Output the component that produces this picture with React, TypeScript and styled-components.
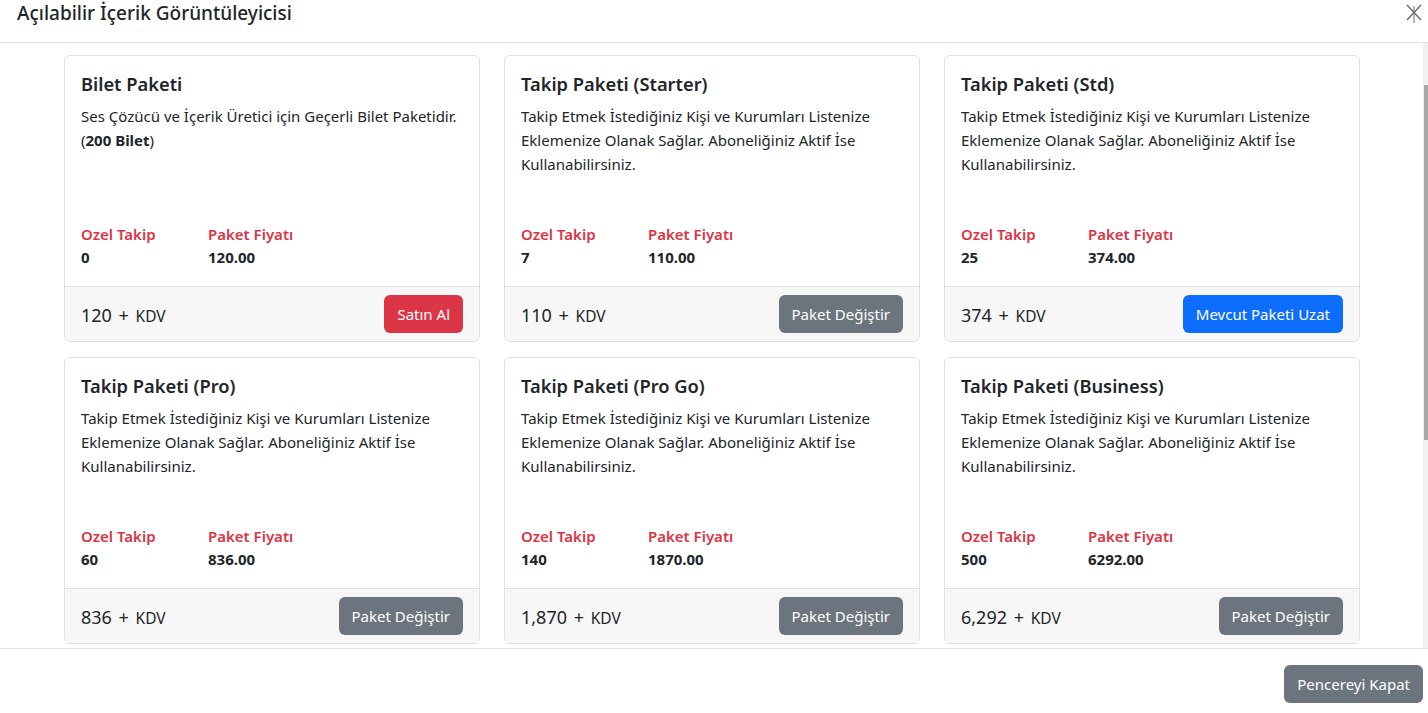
import React from "react";
import styled, { createGlobalStyle } from "styled-components";

const GlobalStyle = createGlobalStyle`
  html, body { margin: 0; padding: 0; background: #fff; overflow: hidden; }
  body { font-family: "Noto Sans", "Open Sans", sans-serif; color: #212529; }
  * { box-sizing: border-box; }
`;

const Modal = styled.div`
  width: 1428px;
  height: 713px;
  display: flex;
  flex-direction: column;
  background: #fff;
`;

const Header = styled.div`
  height: 43px;
  flex: none;
  display: flex;
  align-items: flex-start;
  justify-content: space-between;
  padding: 0 6px 0 17px;
  border-bottom: 1px solid #dee2e6;
`;

const Title = styled.h5`
  margin: 0;
  padding-top: 1px;
  font-size: 19px;
  line-height: 24px;
  font-weight: 500;
  color: #212529;
`;

const CloseBtn = styled.button`
  border: 0;
  background: transparent;
  padding: 3px 0 0;
  margin: 0;
  width: 16px;
  height: 26px;
  cursor: pointer;
  display: flex;
  justify-content: center;
`;

const Body = styled.div`
  flex: 1;
  position: relative;
  overflow: hidden;
  padding: 12px 4px 0 0;
`;

const Grid = styled.div`
  width: 1296px;
  margin: 0 auto;
  display: grid;
  grid-template-columns: repeat(3, 416px);
  column-gap: 24px;
  row-gap: 15px;
`;

const Card = styled.div`
  height: 287px;
  border: 1px solid #dee2e6;
  border-radius: 6px;
  overflow: hidden;
  display: flex;
  flex-direction: column;
  background: #fff;
`;

const CardBody = styled.div`
  flex: 1;
  padding: 16px 16px 17px;
  display: flex;
  flex-direction: column;
`;

const CardTitle = styled.h5`
  margin: 0 0 8px;
  font-size: 18.3px;
  line-height: 24px;
  font-weight: 600;
  color: #212529;
`;

const Desc = styled.p`
  margin: 0;
  font-size: 15px;
  line-height: 24px;
  color: #212529;
  b { font-weight: 700; }
`;

const Stats = styled.div`
  margin-top: auto;
  display: flex;
`;

const Stat = styled.div<{ $w?: number }>`
  width: ${(p) => (p.$w ? `${p.$w}px` : "auto")};
  display: flex;
  flex-direction: column;
`;

const StatLabel = styled.span`
  color: #dc3545;
  font-size: 15px;
  line-height: 23px;
  font-weight: 600;
`;

const StatValue = styled.span`
  color: #212529;
  font-size: 15px;
  line-height: 23px;
  font-weight: 700;
`;

const CardFooter = styled.div`
  flex: none;
  border-top: 1px solid #dee2e6;
  background: #f7f7f7;
  padding: 8px 16px;
  display: flex;
  align-items: center;
  justify-content: space-between;
`;

const Price = styled.span`
  font-size: 18px;
  line-height: 24px;
  color: #212529;
  padding-top: 2px;
  word-spacing: 2px;
`;

const Kdv = styled.span`
  font-size: 15.5px;
`;

const Button = styled.button<{ $variant: "danger" | "secondary" | "primary" }>`
  height: 38px;
  padding: 0 12px;
  border: 1px solid transparent;
  border-radius: 6px;
  font-family: inherit;
  font-size: 15px;
  line-height: 24px;
  color: #fff;
  cursor: pointer;
  background: ${(p) =>
    p.$variant === "danger" ? "#dc3545" : p.$variant === "primary" ? "#0d6efd" : "#6c757d"};
`;

const Footer = styled.div`
  flex: none;
  height: 65px;
  border-top: 1px solid #dee2e6;
  padding: 16px 5px 0 0;
  display: flex;
  justify-content: flex-end;
  align-items: flex-start;
`;

const ScrollTrack = styled.div`
  position: absolute;
  top: 0;
  right: 0;
  bottom: 0;
  width: 5px;
  background: #f1f1f1;
`;

const ScrollThumb = styled.div`
  position: absolute;
  top: 42px;
  right: 0;
  width: 4px;
  height: 355px;
  background: #a8a8a8;
`;

type Pkg = {
  title: string;
  desc: React.ReactNode;
  ozel: string;
  fiyat: string;
  price: string;
  action: string;
  variant: "danger" | "secondary" | "primary";
};

const takipDesc = "Takip Etmek İstediğiniz Kişi ve Kurumları Listenize Eklemenize Olanak Sağlar. Aboneliğiniz Aktif İse Kullanabilirsiniz.";

const packages: Pkg[] = [
  {
    title: "Bilet Paketi",
    desc: (
      <>
        Ses Çözücü ve İçerik Üretici için Geçerli Bilet Paketidir. (<b>200 Bilet</b>)
      </>
    ),
    ozel: "0",
    fiyat: "120.00",
    price: "120",
    action: "Satın Al",
    variant: "danger",
  },
  { title: "Takip Paketi (Starter)", desc: takipDesc, ozel: "7", fiyat: "110.00", price: "110", action: "Paket Değiştir", variant: "secondary" },
  { title: "Takip Paketi (Std)", desc: takipDesc, ozel: "25", fiyat: "374.00", price: "374", action: "Mevcut Paketi Uzat", variant: "primary" },
  { title: "Takip Paketi (Pro)", desc: takipDesc, ozel: "60", fiyat: "836.00", price: "836", action: "Paket Değiştir", variant: "secondary" },
  { title: "Takip Paketi (Pro Go)", desc: takipDesc, ozel: "140", fiyat: "1870.00", price: "1,870", action: "Paket Değiştir", variant: "secondary" },
  { title: "Takip Paketi (Business)", desc: takipDesc, ozel: "500", fiyat: "6292.00", price: "6,292", action: "Paket Değiştir", variant: "secondary" },
];

export default function App() {
  return (
    <>
      <GlobalStyle />
      <Modal>
        <Header>
          <Title>Açılabilir İçerik Görüntüleyicisi</Title>
          <CloseBtn aria-label="Kapat">
            <svg width="16" height="20" viewBox="0 0 16 20">
              <path d="M1 2 L15 17 M15 2 L1 17" stroke="#6b6b6b" strokeWidth="1.4" fill="none" />
              <path d="M8 3 L8 22" stroke="#6b6b6b" strokeWidth="1" fill="none" />
            </svg>
          </CloseBtn>
        </Header>
        <Body>
          <Grid>
            {packages.map((p) => (
              <Card key={p.title}>
                <CardBody>
                  <CardTitle>{p.title}</CardTitle>
                  <Desc>{p.desc}</Desc>
                  <Stats>
                    <Stat $w={127}>
                      <StatLabel>Ozel Takip</StatLabel>
                      <StatValue>{p.ozel}</StatValue>
                    </Stat>
                    <Stat>
                      <StatLabel>Paket Fiyatı</StatLabel>
                      <StatValue>{p.fiyat}</StatValue>
                    </Stat>
                  </Stats>
                </CardBody>
                <CardFooter>
                  <Price>
                    {p.price} + <Kdv>KDV</Kdv>
                  </Price>
                  <Button $variant={p.variant}>{p.action}</Button>
                </CardFooter>
              </Card>
            ))}
          </Grid>
          <ScrollTrack>
            <ScrollThumb />
          </ScrollTrack>
        </Body>
        <Footer>
          <Button $variant="secondary">Pencereyi Kapat</Button>
        </Footer>
      </Modal>
    </>
  );
}
